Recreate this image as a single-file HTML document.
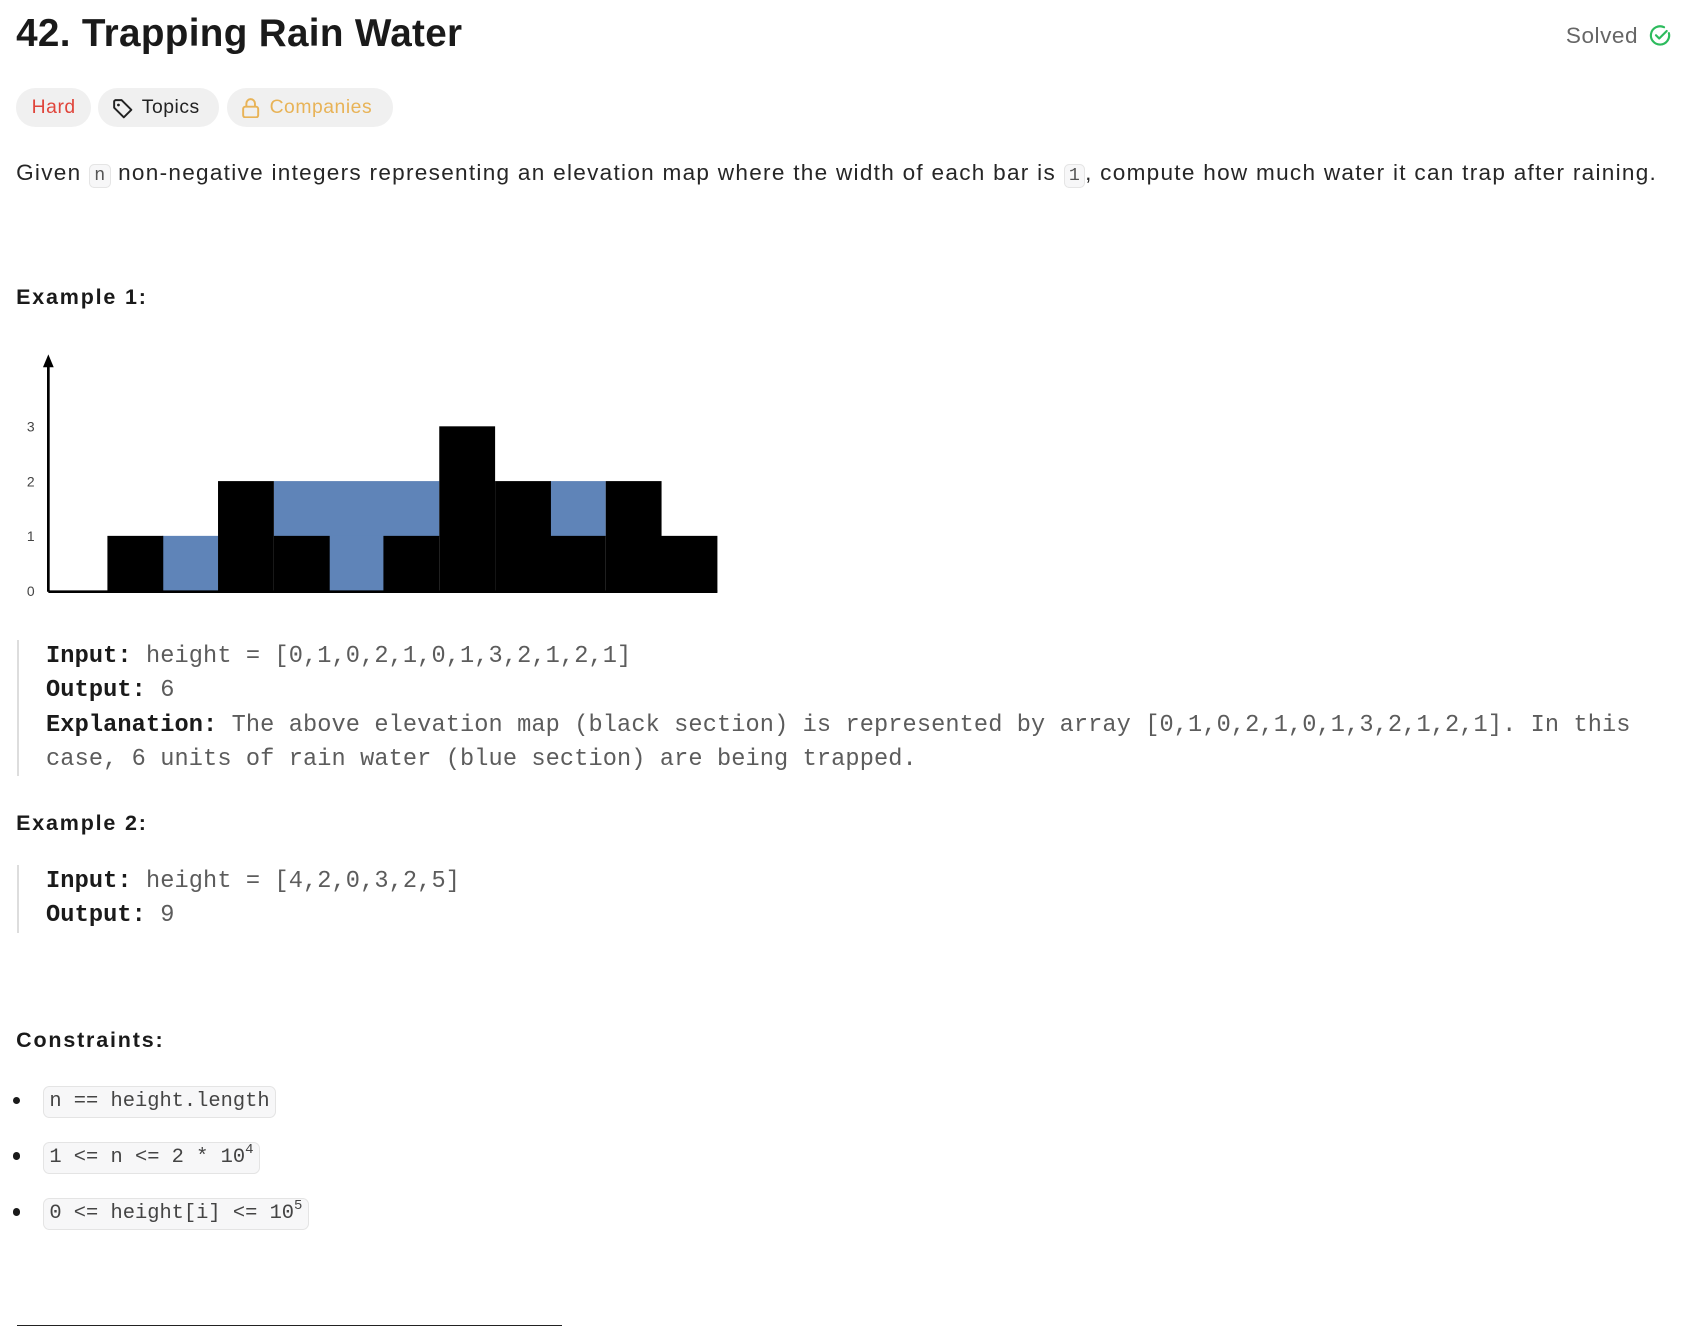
<!DOCTYPE html>
<html><head><meta charset="utf-8"><style>
html,body{margin:0;padding:0;background:#fff;}
body{width:1682px;height:1326px;overflow:hidden;}
#w{zoom:1.074;position:relative;width:1566px;height:1234px;font-family:"Liberation Sans",sans-serif;color:#262626;}
.a{position:absolute;white-space:nowrap;}
h1{position:absolute;left:15px;top:11px;margin:0;font-size:36px;font-weight:bold;letter-spacing:0.3px;color:#1a1a1a;}
.tag{position:absolute;top:82px;height:36px;border-radius:18px;background:#f0f0f0;font-size:18px;line-height:38px;letter-spacing:0.5px;}
.p{font-size:21px;letter-spacing:1.2px;}
code.i{font-family:"Liberation Mono",monospace;font-size:17px;letter-spacing:0;background:#f7f7f8;border:1px solid #e5e5e5;border-radius:5px;padding:1px 4px;color:#555;}
.b{font-weight:bold;font-size:20px;color:#1a1a1a;letter-spacing:1.7px;}
.pre{position:absolute;left:16px;border-left:2px solid #ddd;font-family:"Liberation Mono",monospace;font-size:22px;line-height:32px;color:#5c5c5c;padding-left:25px;white-space:pre;letter-spacing:0.1px;}
.pre b{color:#1a1a1a;}
.c{position:absolute;left:40px;height:28px;border:1px solid #e4e4e4;background:#f7f7f8;border-radius:6px;font-family:"Liberation Mono",monospace;font-size:19px;line-height:28px;padding:0 5px;color:#444;white-space:nowrap;}
.c sup{font-size:13px;vertical-align:top;line-height:14px;}
.dot{position:absolute;left:12px;width:7px;height:7px;border-radius:50%;background:#1a1a1a;}
</style></head><body><div id="w">
<h1>42. Trapping Rain Water</h1>
<div class="a" style="left:1458px;top:21px;font-size:21px;color:#666;letter-spacing:0.5px;">Solved</div>
<svg class="a" style="left:1535px;top:22px" width="21" height="21" viewBox="0 0 21 21"><path d="M18.5 8.5A8.5 8.5 0 1 1 14 3" fill="none" stroke="#2cbb5d" stroke-width="2" stroke-linecap="round"/><path d="M6.5 10.5l3 3 7-7" fill="none" stroke="#2cbb5d" stroke-width="2" stroke-linecap="round" stroke-linejoin="round"/></svg>
<div class="tag" style="left:15px;width:70px;color:#e0453b;text-align:center;">Hard</div>
<div class="tag" style="left:91px;width:113px;"><svg style="position:absolute;left:13px;top:9px" width="20" height="20" viewBox="0 0 20 20"><path d="M2 3v6l9 9 7-7-9-9H3z" fill="none" stroke="#222" stroke-width="1.8" stroke-linejoin="round"/><circle cx="6" cy="6.5" r="1.3" fill="#222"/></svg><span style="position:absolute;left:41px;color:#222">Topics</span></div>
<div class="tag" style="left:211px;width:155px;color:#e8b357;"><svg style="position:absolute;left:13px;top:8px" width="18" height="20" viewBox="0 0 18 20"><rect x="2" y="9" width="14" height="10" rx="2" fill="none" stroke="#e8b357" stroke-width="1.8"/><path d="M5 9V6a4 4 0 0 1 8 0v3" fill="none" stroke="#e8b357" stroke-width="1.8"/></svg><span style="position:absolute;left:40px;">Companies</span></div>
<div class="a p" style="left:15px;top:149px;">Given <code class="i">n</code> non-negative integers representing an elevation map where the width of each bar is <code class="i">1</code>, compute how much water it can trap after raining.</div>
<div class="a b" style="left:15px;top:265px;">Example 1:</div>
<svg class="a" style="left:0;top:325px" width="680" height="235" viewBox="0 325 680 235">
<g fill="#5f84b8"><rect x="151" y="499" width="52" height="52"/><rect x="255" y="448" width="154" height="52"/><rect x="306" y="499" width="52" height="52"/><rect x="512" y="448" width="52" height="52"/></g>
<g fill="#000"><rect x="100" y="499" width="52" height="52"/><rect x="203" y="448" width="52" height="103"/><rect x="255" y="499" width="52" height="52"/><rect x="357" y="499" width="52" height="52"/><rect x="409" y="397" width="52" height="154"/><rect x="461" y="448" width="52" height="103"/><rect x="512" y="499" width="52" height="52"/><rect x="564" y="448" width="52" height="103"/><rect x="615" y="499" width="53" height="52"/></g>
<path d="M45 551V338M45 551H668" stroke="#000" stroke-width="2.5" fill="none"/>
<path d="M40 342L45 330L50 342Z" fill="#000"/>
<g font-family="Liberation Sans,sans-serif" font-size="13" fill="#444"><text x="25" y="402">3</text><text x="25" y="453">2</text><text x="25" y="504">1</text><text x="25" y="555">0</text></g>
</svg>
<div class="pre" style="top:596px;height:127px;"><b>Input:</b> height = [0,1,0,2,1,0,1,3,2,1,2,1]
<b>Output:</b> 6
<b>Explanation:</b> The above elevation map (black section) is represented by array [0,1,0,2,1,0,1,3,2,1,2,1]. In this
case, 6 units of rain water (blue section) are being trapped.</div>
<div class="a b" style="left:15px;top:755px;">Example 2:</div>
<div class="pre" style="top:805px;height:64px;"><b>Input:</b> height = [4,2,0,3,2,5]
<b>Output:</b> 9</div>
<div class="a b" style="left:15px;top:957px;">Constraints:</div>
<div class="dot" style="top:1021px"></div><div class="c" style="top:1011px">n == height.length</div>
<div class="dot" style="top:1073px"></div><div class="c" style="top:1063px">1 &lt;= n &lt;= 2 * 10<sup>4</sup></div>
<div class="dot" style="top:1125px"></div><div class="c" style="top:1115px">0 &lt;= height[i] &lt;= 10<sup>5</sup></div>
<div class="a" style="left:16px;top:1234px;width:507px;height:1px;background:#222;"></div>
</div></body></html>
